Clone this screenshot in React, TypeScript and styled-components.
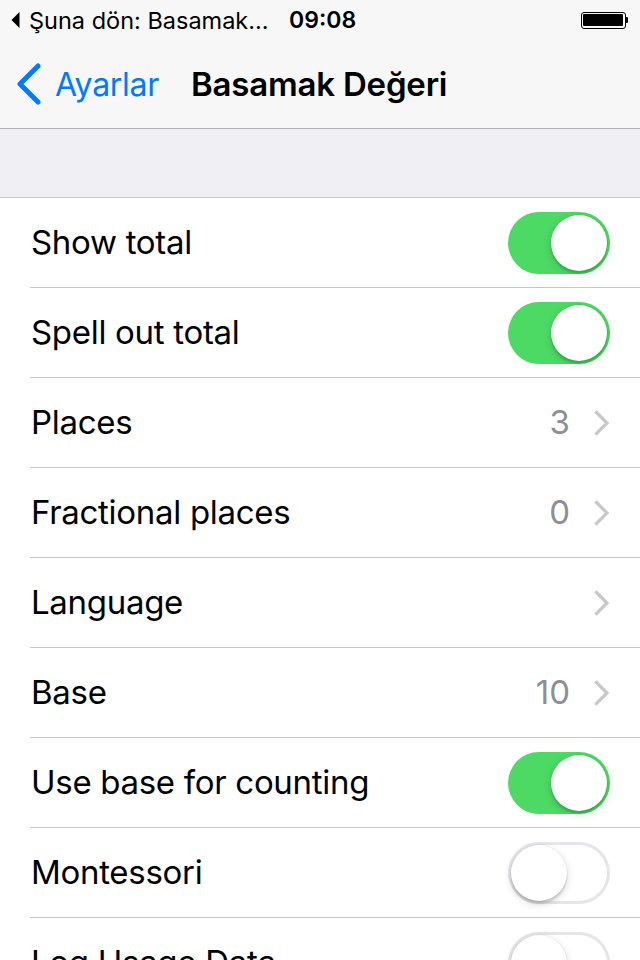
import React from "react";
import styled, { createGlobalStyle } from "styled-components";

const Global = createGlobalStyle`
  html, body { margin: 0; padding: 0; background: #efeff4; }
  body { font-family: "Inter", "Roboto", sans-serif; -webkit-font-smoothing: antialiased; }
  * { box-sizing: border-box; }
`;

const Screen = styled.div`
  width: 640px;
  height: 960px;
  overflow: hidden;
  background: #efeff4;
  display: flex;
  flex-direction: column;
  & > * { flex-shrink: 0; }
`;

const Header = styled.div`
  background: #f7f7f7;
  border-bottom: 1px solid #b2b2b2;
  display: flex;
  flex-direction: column;
`;

const StatusBar = styled.div`
  height: 40px;
  display: flex;
  align-items: center;
  padding: 0 12px 0 11px;
  font-size: 23px;
  color: #000;
`;

const BackApp = styled.div`
  display: flex;
  align-items: center;
  gap: 9px;
  width: 278px;
  font-size: 23.5px;
`;

const Clock = styled.div`
  font-weight: 600;
  flex: 1;
`;

const Battery = styled.div`
  display: flex;
  align-items: center;
`;

const BatteryBody = styled.div`
  width: 45px;
  height: 17px;
  border: 1.5px solid #000;
  border-radius: 3px;
  padding: 1.5px;
  & > div { width: 100%; height: 100%; background: #000; border-radius: 1px; }
`;

const BatteryTip = styled.div`
  width: 2.5px;
  height: 6px;
  background: #000;
  border-radius: 0 1px 1px 0;
`;

const NavBar = styled.div`
  height: 88px;
  display: flex;
  align-items: center;
  padding-left: 16px;
`;

const BackButton = styled.div`
  display: flex;
  align-items: center;
  gap: 13px;
  color: #007aff;
  font-size: 32px;
  width: 175px;
  letter-spacing: -0.3px;
`;

const Title = styled.div`
  font-size: 33px;
  font-weight: 600;
  color: #000;
  letter-spacing: -0.2px;
`;

const Spacer = styled.div`
  height: 69px;
  border-bottom: 1px solid #c8c7cc;
`;

const List = styled.div`
  background: #fff;
  display: flex;
  flex-direction: column;
`;

const Row = styled.div`
  height: 90px;
  display: flex;
  align-items: center;
  padding-left: 31px;
  position: relative;
  &:not(:last-child)::after {
    content: "";
    position: absolute;
    left: 30px;
    right: 0;
    bottom: 0;
    height: 1px;
    background: #c8c7cc;
  }
`;

const Label = styled.div`
  flex: 1;
  font-size: 33px;
  color: #000;
  letter-spacing: -0.3px;
  margin-bottom: 2px;
`;

const Value = styled.div`
  font-size: 33px;
  color: #8e8e93;
  margin-right: 24px;
  margin-bottom: 2px;
`;

const ChevronWrap = styled.div`
  width: 16px;
  margin-right: 30px;
  display: flex;
  align-items: center;
`;

const Track = styled.div<{ $on: boolean }>`
  width: 102px;
  height: 62px;
  border-radius: 31px;
  margin-right: 30px;
  position: relative;
  background: ${(p) => (p.$on ? "#4cd964" : "#fff")};
  box-shadow: ${(p) => (p.$on ? "none" : "inset 0 0 0 3px #e5e5ea")};
`;

const Knob = styled.div<{ $on: boolean }>`
  position: absolute;
  top: 3px;
  left: ${(p) => (p.$on ? "43px" : "3px")};
  width: 56px;
  height: 56px;
  border-radius: 50%;
  background: #fff;
  box-shadow: 0 3px 2px rgba(0, 0, 0, 0.12), 0 3px 8px rgba(0, 0, 0, 0.15), 0 0 0 0.5px rgba(0, 0, 0, 0.08);
`;

const Chevron = () => (
  <svg width="16" height="26" viewBox="0 0 16 26">
    <path d="M2.5 2.5 L13 13 L2.5 23.5" fill="none" stroke="#c7c7cc" strokeWidth="3.2" strokeLinecap="square" />
  </svg>
);

const Toggle = ({ on }: { on: boolean }) => (
  <Track $on={on}>
    <Knob $on={on} />
  </Track>
);

type Item = { label: string; toggle?: boolean; value?: string; nav?: boolean };

const items: Item[] = [
  { label: "Show total", toggle: true },
  { label: "Spell out total", toggle: true },
  { label: "Places", nav: true, value: "3" },
  { label: "Fractional places", nav: true, value: "0" },
  { label: "Language", nav: true, value: "" },
  { label: "Base", nav: true, value: "10" },
  { label: "Use base for counting", toggle: true },
  { label: "Montessori", toggle: false },
  { label: "Log Usage Data", toggle: false },
];

export default function App() {
  return (
    <>
      <Global />
      <Screen>
        <Header>
          <StatusBar>
            <BackApp>
              <svg width="9" height="18" viewBox="0 0 9 18">
                <path d="M8.5 1 L0.5 9 L8.5 17 Z" fill="#000" />
              </svg>
              <span>Şuna dön: Basamak...</span>
            </BackApp>
            <Clock>09:08</Clock>
            <Battery>
              <BatteryBody>
                <div />
              </BatteryBody>
              <BatteryTip />
            </Battery>
          </StatusBar>
          <NavBar>
            <BackButton>
              <svg width="26" height="42" viewBox="0 0 26 42">
                <path d="M22 3 L4 21 L22 39" fill="none" stroke="#007aff" strokeWidth="5" strokeLinecap="round" strokeLinejoin="round" />
              </svg>
              <span>Ayarlar</span>
            </BackButton>
            <Title>Basamak Değeri</Title>
          </NavBar>
        </Header>
        <Spacer />
        <List>
          {items.map((it) => (
            <Row key={it.label}>
              <Label>{it.label}</Label>
              {it.toggle !== undefined && !it.nav && <Toggle on={!!it.toggle} />}
              {it.nav && (
                <>
                  {it.value ? <Value>{it.value}</Value> : null}
                  <ChevronWrap>
                    <Chevron />
                  </ChevronWrap>
                </>
              )}
            </Row>
          ))}
        </List>
      </Screen>
    </>
  );
}
